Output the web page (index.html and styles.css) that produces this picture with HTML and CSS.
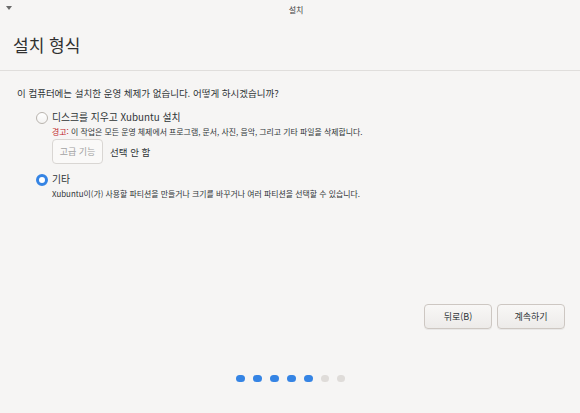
FILE: index.html
```html
<!DOCTYPE html>
<html lang="ko">
<head>
<meta charset="utf-8">
<link rel="stylesheet" href="styles.css">
</head>
<body>
<div class="window">
  <div class="titlebar">
    <span class="menu-arrow"></span>
    <span class="title">설치</span>
  </div>
  <div class="header">
    <h1 class="heading">설치 형식</h1>
  </div>
  <div class="content">
    <p class="question">이 컴퓨터에는 설치한 운영 체제가 없습니다. 어떻게 하시겠습니까?</p>
    <div class="options">
      <div class="option">
        <div class="option-row">
          <span class="radio"></span>
          <span class="label">디스크를 지우고 Xubuntu 설치</span>
        </div>
        <div class="desc"><span class="warn">경고:</span> 이 작업은 모든 운영 체제에서 프로그램, 문서, 사진, 음악, 그리고 기타 파일을 삭제합니다.</div>
        <div class="advanced">
          <button class="btn btn-disabled">고급 기능</button>
          <span class="adv-label">선택 안 함</span>
        </div>
      </div>
      <div class="option option-second">
        <div class="option-row">
          <span class="radio radio-checked"></span>
          <span class="label">기타</span>
        </div>
        <div class="desc">Xubuntu이(가) 사용할 파티션을 만들거나 크기를 바꾸거나 여러 파티션을 선택할 수 있습니다.</div>
      </div>
    </div>
  </div>
  <div class="actions">
    <button class="btn btn-action">뒤로(B)</button>
    <button class="btn btn-action">계속하기</button>
  </div>
  <div class="dots">
    <span class="dot dot-on"></span>
    <span class="dot dot-on"></span>
    <span class="dot dot-on"></span>
    <span class="dot dot-on"></span>
    <span class="dot dot-on"></span>
    <span class="dot dot-off"></span>
    <span class="dot dot-off"></span>
  </div>
</div>
</body>
</html>
```

FILE: styles.css
```css
* { box-sizing: border-box; }
html, body {
  margin: 0;
  padding: 0;
  background: #f6f5f4;
}
body {
  font-family: "Noto Sans CJK KR", "Noto Sans", sans-serif;
  color: #2e3436;
}
.window {
  width: 580px;
  height: 413px;
  display: flex;
  flex-direction: column;
  background: #f6f5f4;
}
.titlebar {
  height: 20px;
  display: flex;
  align-items: center;
  justify-content: center;
  position: relative;
  font-size: 8px;
  color: #3d3d3d;
}
.menu-arrow {
  position: absolute;
  left: 6px;
  top: 6px;
  width: 0;
  height: 0;
  border-left: 3px solid transparent;
  border-right: 3px solid transparent;
  border-top: 4px solid #6a6a6a;
}
.title { margin-left: 12px; margin-top: -2px; }
.header {
  height: 51px;
  display: flex;
  align-items: center;
  padding-left: 13px;
  border-bottom: 1px solid #e0dedc;
}
.heading {
  margin: 0;
  font-size: 17px;
  font-weight: 400;
  color: #303030;
  padding-bottom: 1px;
}
.content {
  padding: 16px 0 0 17px;
}
.question {
  margin: 0;
  font-size: 9.5px;
  line-height: 13px;
}
.options {
  padding-left: 19px;
  margin-top: 11px;
}
.option-row {
  display: flex;
  align-items: center;
  gap: 4px;
  height: 13px;
}
.radio {
  width: 12px;
  height: 12px;
  border-radius: 50%;
  border: 1px solid #b9b4ae;
  background: linear-gradient(#ffffff, #f4f3f2);
  flex: none;
}
.radio-checked {
  border: 3px solid #3584e4;
  background: #ffffff;
}
.label {
  font-size: 9.8px;
  line-height: 13px;
}
.desc {
  margin-left: 16px;
  margin-top: 2px;
  font-size: 7.9px;
  line-height: 12px;
}
.warn { color: #c01c28; }
.advanced {
  margin-left: 16px;
  margin-top: 1px;
  display: flex;
  align-items: center;
  gap: 7px;
}
.btn {
  font-family: "Noto Sans CJK KR", "Noto Sans", sans-serif;
  border-radius: 4px;
  padding: 0;
}
.btn-disabled {
  width: 51px;
  height: 25px;
  border: 1px solid #d9d6d3;
  background: #faf9f8;
  color: #a3a3a3;
  font-size: 9px;
}
.adv-label {
  font-size: 9.5px;
}
.option-second { margin-top: 9px; }
.option-second .desc { margin-top: 2px; }
.actions {
  margin-top: auto;
  display: flex;
  justify-content: flex-end;
  gap: 5px;
  padding-right: 15px;
}
.btn-action {
  width: 68px;
  height: 25px;
  border: 1px solid #cdc7c2;
  background: linear-gradient(#f8f7f6, #edebe9);
  color: #2e3436;
  font-size: 9px;
  box-shadow: 0 1px 0 rgba(0,0,0,0.05);
}
.dots {
  display: flex;
  justify-content: center;
  gap: 8px;
  height: 7px;
  margin: 46px 0 31px 0;
}
.dot {
  height: 7px;
  border-radius: 3.5px;
}
.dot-on { width: 9px; background: #3584e4; }
.dot-off { width: 8px; background: #dfdcd9; }
```
